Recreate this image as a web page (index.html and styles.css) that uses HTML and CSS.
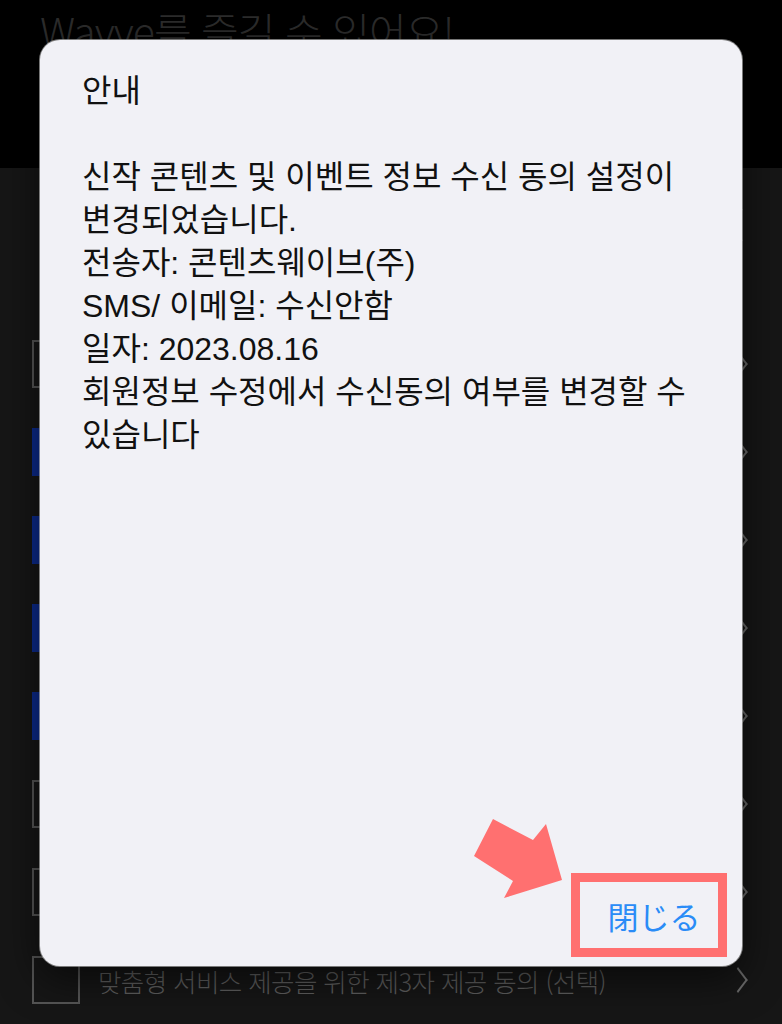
FILE: index.html
```html
<!DOCTYPE html>
<html lang="ko">
<head>
    <meta charset="UTF-8">
    <meta name="viewport" content="width=device-width, initial-scale=1.0">
    <title>Wavve 안내</title>
    <link rel="stylesheet" href="styles.css">
</head>
<body>
    <div class="page">
        <div class="top">
            <h1>Wavve를 즐길 수 있어요!</h1>
        </div>
        <div class="sheet">
            <div class="sheet-head">
                <svg class="close" width="40" height="40" viewBox="0 0 40 40">
                    <path d="M4 4 L36 36 M36 4 L4 36" stroke="#9a9a9a" stroke-width="2" fill="none"/>
                </svg>
            </div>
            <ul class="terms">
                <li class="term"><span class="check"></span><span class="label">전체 동의</span><span class="chev"></span></li>
                <li class="term"><span class="check on"></span><span class="label">만 14세 이상입니다 (필수)</span><span class="chev"></span></li>
                <li class="term"><span class="check on"></span><span class="label">서비스 이용약관 동의 (필수)</span><span class="chev"></span></li>
                <li class="term"><span class="check on"></span><span class="label">개인정보 수집 및 이용 동의 (필수)</span><span class="chev"></span></li>
                <li class="term"><span class="check on"></span><span class="label">개인정보 제3자 제공 동의 (필수)</span><span class="chev"></span></li>
                <li class="term"><span class="check"></span><span class="label">마케팅 정보 수신 동의 (선택)</span><span class="chev"></span></li>
                <li class="term"><span class="check"></span><span class="label">신작 콘텐츠 및 이벤트 정보 수신 동의 (선택)</span><span class="chev"></span></li>
                <li class="term"><span class="check"></span><span class="label">맞춤형 서비스 제공을 위한 제3자 제공 동의 (선택)</span><span class="chev"></span></li>
            </ul>
        </div>

        <div class="alert">
            <div class="alert-title">안내</div>
            <div class="alert-body">
                신작 콘텐츠 및 이벤트 정보 수신 동의 설정이 변경되었습니다.<br>
                전송자: 콘텐츠웨이브(주)<br>
                SMS/ 이메일: 수신안함<br>
                일자: 2023.08.16<br>
                회원정보 수정에서 수신동의 여부를 변경할 수 있습니다
            </div>
            <div class="alert-foot">
                <button class="alert-btn">閉じる</button>
            </div>
        </div>

        <svg class="pointer" width="100" height="90" viewBox="0 0 100 90">
            <polygon points="4,47 23,10 63,31 76,15 92,71 34,89 43,72" fill="#ff7070"/>
        </svg>
    </div>
</body>
</html>
```

FILE: styles.css
```css
body {
    margin: 0;
    padding: 0;
    background-color: #161616;
    font-family: 'Liberation Sans', 'Noto Sans CJK KR', sans-serif;
}

.page {
    position: relative;
    width: 782px;
    height: 1024px;
    overflow: hidden;
    background-color: #161616;
}

.top {
    height: 168px;
    background-color: #000;
    box-sizing: border-box;
    padding: 0 0 0 40px;
}

.top h1 {
    margin: 0;
    font-family: 'Noto Sans CJK KR', sans-serif;
    font-size: 41px;
    font-weight: 300;
    color: #2c2c2c;
    letter-spacing: -1px;
}

.sheet-head {
    display: flex;
    justify-content: flex-end;
    padding: 37px 36px 0 0;
    height: 40px;
}

.terms {
    list-style: none;
    margin: 0;
    padding: 75px 0 0 0;
}

.term {
    display: flex;
    align-items: center;
    height: 88px;
    padding: 0 36px 0 32px;
}

.check {
    width: 44px;
    height: 44px;
    border: 2px solid #555;
    flex-shrink: 0;
}

.check.on {
    background-color: #0b2a8c;
    border-color: #0b2a8c;
}

.label {
    flex: 1;
    margin-left: 18px;
    font-family: 'Noto Sans CJK KR', sans-serif;
    font-size: 25.5px;
    font-weight: 300;
    color: #5e5e5e;
    letter-spacing: -0.6px;
}

.chev {
    width: 14px;
    height: 14px;
    border-top: 2px solid #6a6a6a;
    border-right: 2px solid #6a6a6a;
    transform: rotate(45deg) skew(8deg, 8deg);
}

.alert {
    position: absolute;
    top: 40px;
    left: 40px;
    width: 702px;
    height: 926px;
    box-sizing: border-box;
    display: flex;
    flex-direction: column;
    background-color: #f1f1f6;
    border-radius: 20px;
    box-shadow: 0 0 0 1px rgba(170, 170, 170, 0.7), 0 12px 40px rgba(0, 0, 0, 0.6);
    padding: 30px 28px 9px 42px;
    color: #111;
}

.alert-title {
    font-size: 32px;
    line-height: 43px;
}

.alert-body {
    flex: 1;
    margin-top: 43px;
    font-size: 32px;
    line-height: 43px;
    word-break: keep-all;
}

.alert-foot {
    display: flex;
    justify-content: flex-end;
    margin-right: -13px;
}

.alert-btn {
    width: 156px;
    height: 84px;
    box-sizing: border-box;
    border: 9px solid #ff7070;
    background: none;
    padding: 0 0 0 10px;
    font-family: 'Noto Sans CJK JP', sans-serif;
    font-size: 31px;
    color: #2a8cf7;
}

.pointer {
    position: absolute;
    left: 470px;
    top: 809px;
}
```
